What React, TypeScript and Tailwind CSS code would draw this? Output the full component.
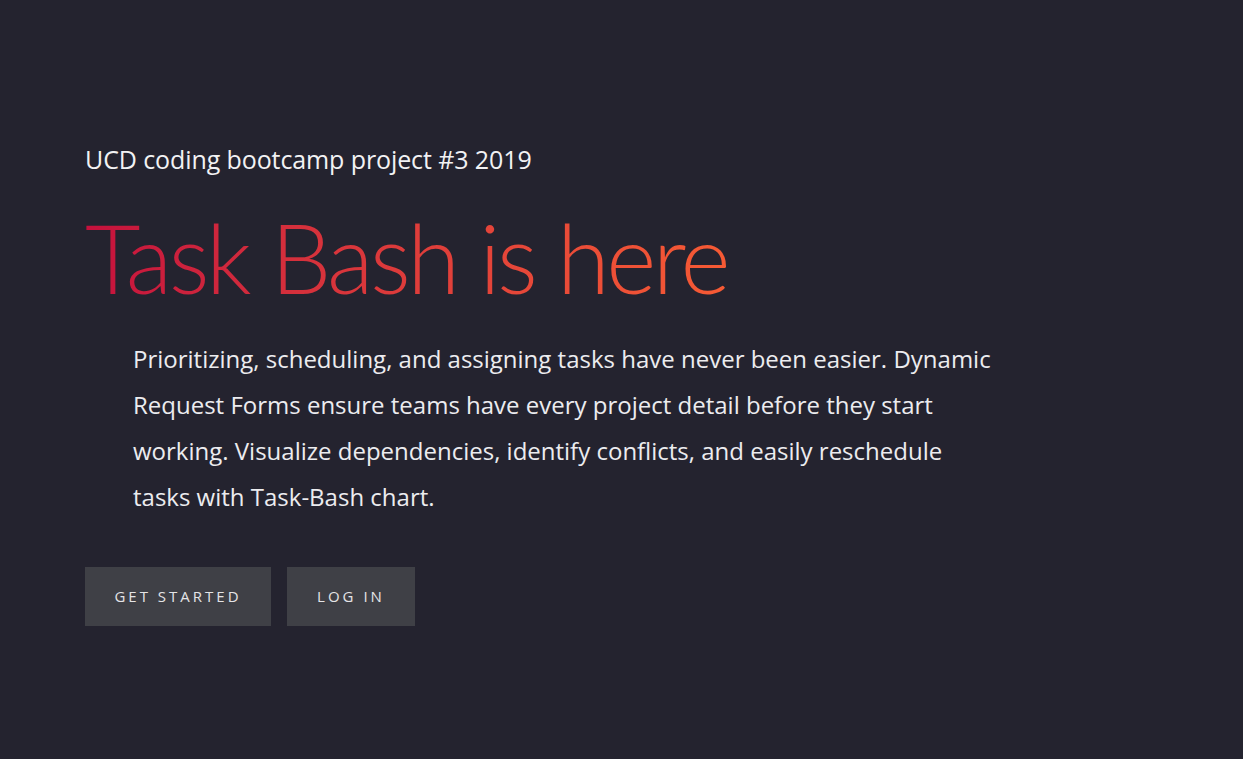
export default function App() {
  return (
    <div
      className="min-h-[759px] w-full bg-[#24232f] text-[#f2f2f4]"
      style={{ fontFamily: '"Open Sans", "Noto Sans", sans-serif' }}
    >
      <div className="px-[85px] pt-[141px]">
        <p className="text-[25px] leading-[36px] tracking-[-0.1px]">UCD coding bootcamp project #3 2019</p>
        <h1
          className="mt-[25px] text-[96px] leading-[110px] font-light tracking-[-3.5px] bg-gradient-to-r from-[#c5103d] to-[#f65a34] bg-clip-text text-transparent w-fit"
          style={{ fontFamily: 'Lato, "Open Sans", sans-serif' }}
        >
          Task Bash is here
        </h1>
        <p className="mt-[24px] ml-[48px] max-w-[870px] text-[24px] leading-[46px] text-[#ececef]">
          Prioritizing, scheduling, and assigning tasks have never been easier. Dynamic Request Forms ensure teams have every project detail before they start working. Visualize dependencies, identify conflicts, and easily reschedule tasks with Task-Bash chart.
        </p>
        <div className="mt-[47px] flex gap-4">
          <button className="h-[59px] w-[186px] bg-[#3f4046] text-[15px] tracking-[3px] text-[#e4e4e6]">GET STARTED</button>
          <button className="h-[59px] w-[128px] bg-[#3f4046] text-[15px] tracking-[3px] text-[#e4e4e6]">LOG IN</button>
        </div>
      </div>
    </div>
  )
}
